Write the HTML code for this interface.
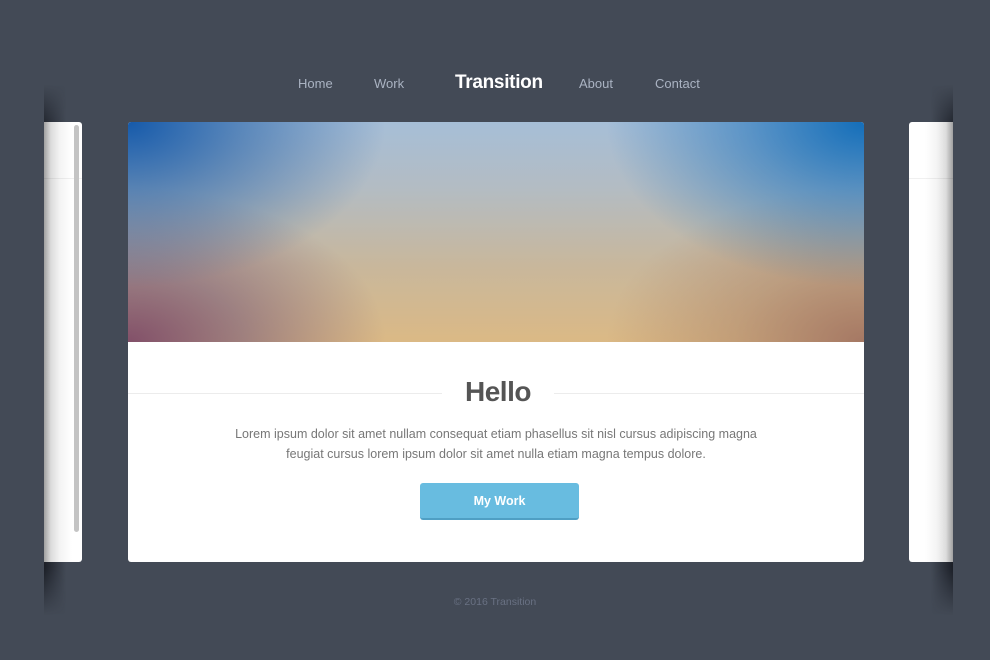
<!DOCTYPE html>
<html><head><meta charset="utf-8"><style>
*{margin:0;padding:0;box-sizing:border-box}
body{width:990px;height:660px;background:#434a56;font-family:"Liberation Sans",sans-serif;position:relative;overflow:hidden}
.nav a{position:absolute;top:76px;color:#aab3c2;font-size:13px;text-decoration:none}
.logo{position:absolute;top:72px;left:455px;color:#fff;font-weight:bold;font-size:19px;letter-spacing:-0.3px}
.shadowL,.shadowR{position:absolute;top:85px;width:22px;height:530px;-webkit-mask:linear-gradient(180deg,transparent 0,#000 9%,#000 91%,transparent 100%)}
.shadowL{left:44px;background:linear-gradient(90deg,rgba(20,23,30,.85),rgba(67,74,86,0));}
.shadowR{left:931px;background:linear-gradient(270deg,rgba(20,23,30,.85),rgba(67,74,86,0));}
.side{position:absolute;top:122px;height:440px;background:#fff;}
.sideL{left:44px;width:38px;border-radius:0 3px 3px 0;background:linear-gradient(90deg,#a0a0a0 0,#dcdcdc 7px,#f4f4f4 16px,#fff 28px)}
.sideR{left:909px;width:44px;border-radius:3px 0 0 3px;background:linear-gradient(270deg,#a0a0a0 0,#dcdcdc 7px,#f4f4f4 16px,#fff 28px)}
.side .ln{position:absolute;top:56px;left:0;right:0;height:1px;background:rgba(0,0,0,.06)}
.scroll{position:absolute;left:30px;top:3px;width:5px;height:407px;background:#c4c4c4;border-radius:3px}
.card{position:absolute;left:128px;top:122px;width:736px;height:440px;background:#fff;border-radius:3px;overflow:hidden}
.hero{height:220px;position:relative;
background:
radial-gradient(ellipse 35% 75% at 0% 0%,rgba(22,90,170,1) 0,rgba(40,100,170,.6) 45%,rgba(60,110,170,0) 100%),
radial-gradient(ellipse 35% 75% at 100% 0%,rgba(20,110,185,1) 0,rgba(40,120,190,.6) 45%,rgba(60,130,190,0) 100%),
radial-gradient(ellipse 35% 70% at 0% 100%,rgba(130,80,105,1) 0,rgba(120,90,120,.6) 45%,rgba(120,100,130,0) 100%),
radial-gradient(ellipse 35% 70% at 100% 100%,rgba(165,120,100,1) 0,rgba(170,130,105,.5) 50%,rgba(170,130,105,0) 100%),
linear-gradient(180deg,#a6bed7 0,#b3bcc3 30%,#c8b79c 65%,#dbb985 100%);}
.hr{position:absolute;top:271px;left:0;right:0;height:1px;background:#ececec}
h1{position:absolute;top:254px;left:314px;width:112px;text-align:center;background:#fff;color:#555;font-size:28px;font-weight:bold;letter-spacing:-0.5px}
p{position:absolute;top:302px;left:0;width:736px;text-align:center;color:#777;font-size:12.5px;line-height:20px}
.btn{position:absolute;left:292px;top:361px;width:159px;height:37px;background:#68bce0;border-radius:3px;border-bottom:2px solid #4f9fc4;color:#fff;font-weight:bold;font-size:12.5px;text-align:center;line-height:36px}
.foot{position:absolute;top:596px;left:0;width:990px;text-align:center;color:#697183;font-size:10.5px}
</style></head><body>
<div class="nav"><a style="left:298px">Home</a><a style="left:374px">Work</a><a style="left:579px">About</a><a style="left:655px">Contact</a></div>
<div class="logo">Transition</div>
<div class="shadowL"></div><div class="shadowR"></div>
<div class="side sideL"><div class="ln"></div><div class="scroll"></div></div>
<div class="side sideR"><div class="ln"></div></div>
<div class="card">
<div class="hero"></div>
<div class="hr"></div>
<h1>Hello</h1>
<p>Lorem ipsum dolor sit amet nullam consequat etiam phasellus sit nisl cursus adipiscing magna<br>feugiat cursus lorem ipsum dolor sit amet nulla etiam magna tempus dolore.</p>
<div class="btn">My Work</div>
</div>
<div class="foot">© 2016 Transition</div>
</body></html>
